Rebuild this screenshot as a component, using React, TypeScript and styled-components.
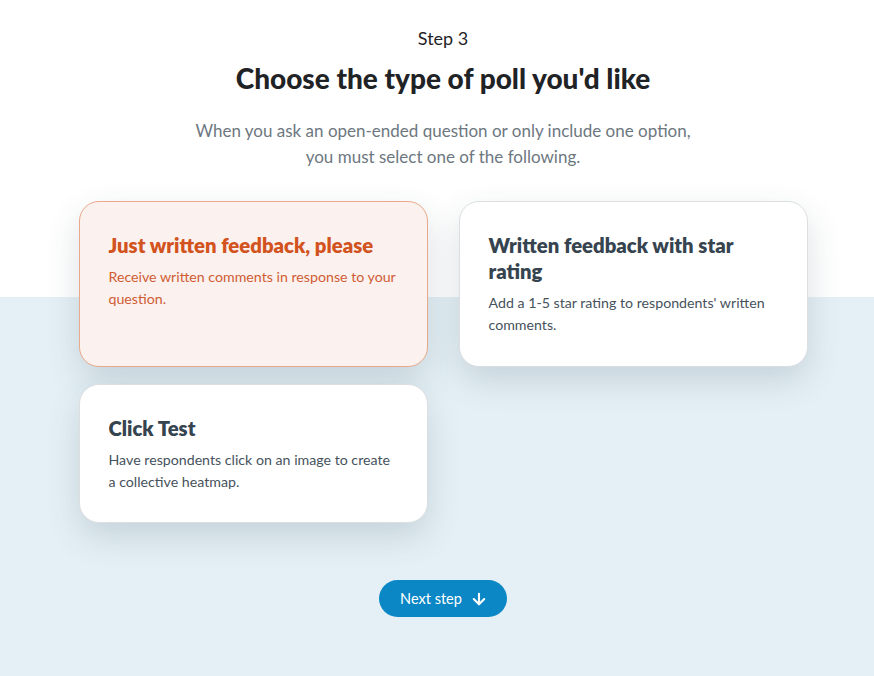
import React, { useState } from "react";
import styled, { createGlobalStyle } from "styled-components";
import { ArrowDown } from "lucide-react";

const GlobalStyle = createGlobalStyle`
  html, body {
    margin: 0;
    padding: 0;
    background: #ffffff;
    font-family: Lato, "Liberation Sans", sans-serif;
  }
`;

const Page = styled.div`
  min-height: 676px;
  box-sizing: border-box;
  padding-left: 12px;
  background: linear-gradient(to bottom, #ffffff 0, #ffffff 297px, #e5f0f6 297px);
  display: flex;
  flex-direction: column;
  align-items: center;
`;

const Header = styled.header`
  display: flex;
  flex-direction: column;
  align-items: center;
  text-align: center;
  padding-top: 26px;
`;

const StepLabel = styled.div`
  font-size: 18px;
  font-weight: 400;
  color: #1f2326;
  line-height: 24px;
`;

const Title = styled.h1`
  margin: 11px 0 0;
  font-size: 28px;
  font-weight: 900;
  color: #1f2326;
  line-height: 34px;
`;

const Subtitle = styled.p`
  margin: 23px 0 0;
  font-size: 17px;
  line-height: 26px;
  color: #6d7780;
  max-width: 520px;
`;

const Grid = styled.div`
  margin-top: 31px;
  display: grid;
  grid-template-columns: 349px 349px;
  column-gap: 31px;
  row-gap: 17px;
  align-items: start;
`;

const Card = styled.button<{ $active?: boolean; $tall?: boolean }>`
  all: unset;
  box-sizing: border-box;
  cursor: pointer;
  height: ${(p) => (p.$tall ? "166px" : "139px")};
  padding: 30px 29px;
  border-radius: 20px;
  background: ${(p) => (p.$active ? "#fbf1ee" : "#ffffff")};
  border: 1px solid ${(p) => (p.$active ? "#e9a98c" : "#dcdfe2")};
  box-shadow: 0 14px 34px rgba(40, 60, 75, 0.16);
  display: flex;
  flex-direction: column;
  gap: 8px;
`;

const CardTitle = styled.div<{ $active?: boolean }>`
  font-size: 20.3px;
  font-weight: 800;
  line-height: 26px;
  color: ${(p) => (p.$active ? "#d2531d" : "#36444f")};
  padding-right: 5px;
`;

const CardText = styled.div<{ $active?: boolean }>`
  font-size: 14.2px;
  line-height: 22px;
  color: ${(p) => (p.$active ? "#d05c34" : "#46525c")};
`;

const NextButton = styled.button`
  margin-top: 57px;
  height: 37px;
  padding: 0 19px 0 21px;
  border: none;
  border-radius: 19px;
  background: #0b87c5;
  color: #ffffff;
  font-family: Lato, "Liberation Sans", sans-serif;
  font-size: 14.5px;
  display: flex;
  align-items: center;
  gap: 8px;
  cursor: pointer;
`;

const options = [
  {
    id: "written",
    title: "Just written feedback, please",
    text: "Receive written comments in response to your question.",
  },
  {
    id: "star",
    title: "Written feedback with star rating",
    text: "Add a 1-5 star rating to respondents' written comments.",
  },
  {
    id: "click",
    title: "Click Test",
    text: "Have respondents click on an image to create a collective heatmap.",
  },
];

const App: React.FC = () => {
  const [selected, setSelected] = useState("written");

  return (
    <>
      <GlobalStyle />
      <Page>
        <Header>
          <StepLabel>Step 3</StepLabel>
          <Title>Choose the type of poll you'd like</Title>
          <Subtitle>
            When you ask an open-ended question or only include one option,
            you must select one of the following.
          </Subtitle>
        </Header>

        <Grid>
          {options.map((o, i) => (
            <Card
              key={o.id}
              $active={selected === o.id}
              $tall={i < 2}
              onClick={() => setSelected(o.id)}
            >
              <CardTitle $active={selected === o.id}>{o.title}</CardTitle>
              <CardText $active={selected === o.id}>{o.text}</CardText>
            </Card>
          ))}
        </Grid>

        <NextButton>
          Next step
          <ArrowDown size={18} strokeWidth={2.8} />
        </NextButton>
      </Page>
    </>
  );
};

export default App;
